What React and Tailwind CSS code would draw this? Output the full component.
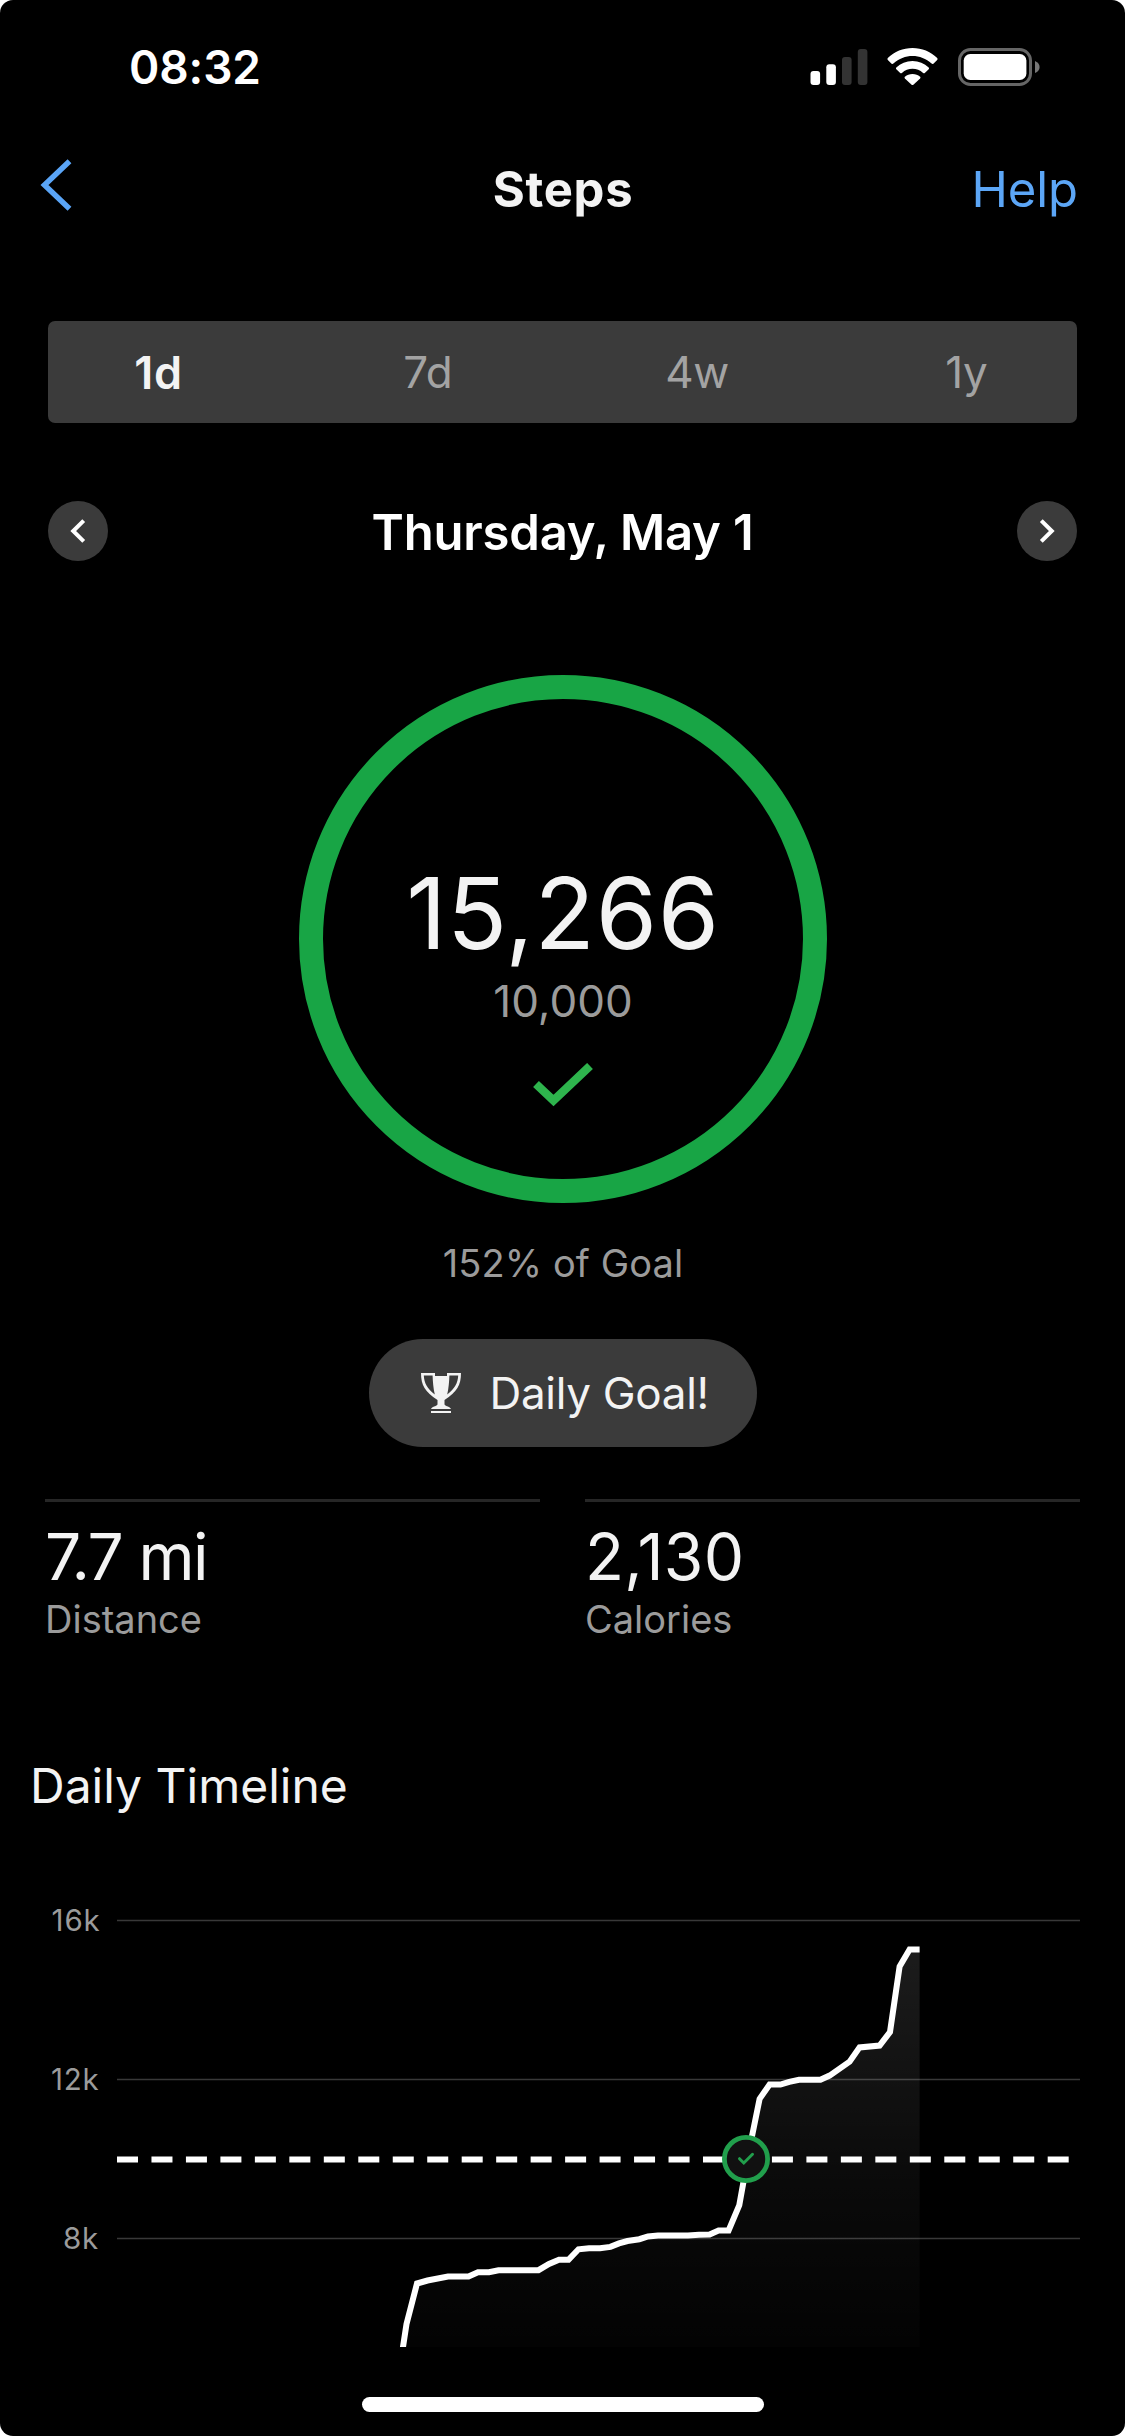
const ranges = ['1d', '7d', '4w', '1y']

const stats = [
  { value: '7.7 mi', label: 'Distance', tracking: 'tracking-[-1.6px]' },
  { value: '2,130', label: 'Calories', tracking: 'tracking-[0.3px]' }
]

const gridLines = [
  { label: '16k', y: 104.5, labelEnd: 100.5 },
  { label: '12k', y: 263.5, labelEnd: 99.5 },
  { label: '8k', y: 422.5, labelEnd: 99 }
]

// cumulative steps through the day, in chart coordinates
const points = [
  [400, 550], [403, 531], [406.5, 508], [417, 467.5], [427.5, 464.5], [448, 460.5],
  [468.5, 460.5], [478, 456.3], [489, 456.3], [498.5, 454.2], [538.5, 454.2],
  [549, 448], [559, 443.8], [568.5, 443.8], [578.5, 433.3], [589, 432.3],
  [600, 432.3], [610.4, 430.9], [619, 427.4], [627.5, 425], [639.3, 423.2],
  [648, 420.4], [658, 419.4], [688, 419.4], [699, 418.7], [709.6, 418.4],
  [718.6, 414.5], [728.6, 414.5], [739.3, 389.1], [749.4, 333], [759.6, 282.9],
  [769.6, 268.6], [780.4, 268.6], [789.3, 265.9], [799, 263.8], [820.4, 263.8],
  [829.6, 259.6], [849.6, 245.7], [859.6, 231.4], [879.6, 229.6], [890, 216],
  [899.6, 150.6], [909.6, 133.5], [919.6, 133.5]
]

const linePath = 'M' + points.map((p) => p.join(' ')).join('L')

function StatusBar() {
  return (
    <div className="flex h-[134px] items-center justify-between pr-[85px] pl-[129px]">
      <span className="text-[46px] leading-none font-[560] tracking-[-0.1px] text-white">08:32</span>

      <svg width="230" height="40" viewBox="0 0 230 40">
        {/* signal */}
        <rect x="0.5" y="24" width="9.6" height="14" rx="3" fill="#fff" />
        <rect x="16.3" y="17.3" width="9.6" height="20.7" rx="3" fill="#fff" />
        <rect x="32" y="10" width="9.6" height="28" rx="3" fill="#333" />
        <rect x="47.8" y="2" width="9.6" height="36" rx="3" fill="#333" />

        {/* wifi */}
        <g fill="#fff">
          <path d="M102.5 1C93 1 84.5 4.5 77.8 11Q77 12 77.8 13L81.6 16.7Q82.5 17.4 83.4 16.6C89 11.5 95.5 9 102.5 9C109.5 9 116 11.5 121.6 16.6Q122.5 17.4 123.4 16.7L127.2 13Q128 12 127.2 11C120.5 4.5 112 1 102.5 1Z" />
          <path d="M102.5 14C96.2 14 90.7 16.3 86.3 20.4Q85.5 21.3 86.3 22.2L90.2 26Q91 26.7 91.9 25.9C95 23.2 98.5 21.8 102.5 21.8C106.5 21.8 110 23.2 113.1 25.9Q114 26.7 114.8 26L118.7 22.2Q119.5 21.3 118.7 20.4C114.3 16.3 108.8 14 102.5 14Z" />
          <path d="M102.5 27C99.5 27 97 28 94.9 29.7Q94 30.6 94.9 31.5L101.6 37.7Q102.5 38.5 103.4 37.7L110.1 31.5Q111 30.6 110.1 29.7C108 28 105.5 27 102.5 27Z" />
        </g>

        {/* battery */}
        <rect x="149.5" y="2.5" width="71" height="35" rx="11" fill="none" stroke="#666" strokeWidth="3" />
        <rect x="153.7" y="7" width="62.7" height="26" rx="6.5" fill="#fff" />
        <path d="M225 14Q229.6 16 229.6 20T225 26Z" fill="#777" />
      </svg>
    </div>
  )
}

function NavBar() {
  return (
    <div className="grid h-[110px] grid-cols-3 items-center pr-[47px] pl-[40px]">
      <svg className="mb-2" width="32" height="52" viewBox="0 0 32 52" fill="none" stroke="#5aa5f7" strokeWidth="5.5">
        <path d="M29.5 2.2L4.5 26L29.5 49.8" />
      </svg>
      <h1 className="pl-2 text-center text-[49px] leading-none font-bold tracking-[0.7px]">Steps</h1>
      <span className="text-right text-[49px] leading-none tracking-[-0.1px] text-[#5ca6f6]">Help</span>
    </div>
  )
}

function CircleButton({ path }) {
  return (
    <button className="flex size-[60px] items-center justify-center rounded-full bg-[#3b3b3b]">
      <svg width="60" height="60" viewBox="0 0 60 60" fill="none" stroke="#fff" strokeWidth="4">
        <path d={path} />
      </svg>
    </button>
  )
}

function Trophy() {
  return (
    <svg width="40" height="40" viewBox="0 0 40 40" fill="#f3f3f3" fillRule="evenodd">
      <path d="M0 0H14V3H26V0H40C40 12 36 19 23.5 27V31.5C25 33.5 29 33.5 30 36H10C11 33.5 15 33.5 16.5 31.5V27C4 19 0 12 0 0ZM2.8 2.4C3.2 10 6 15 13.8 21.5C12.3 15 11.8 8 11.6 2.4ZM37.2 2.4C36.8 10 34 15 26.2 21.5C27.7 15 28.2 8 28.4 2.4Z" />
      <path d="M10 38H30V40H10Z" />
    </svg>
  )
}

function Timeline() {
  return (
    <svg className="block" width="1125" height="531" viewBox="0 0 1125 531">
      <defs>
        <linearGradient id="area" gradientUnits="userSpaceOnUse" x1="0" y1="133" x2="0" y2="600">
          <stop offset="0" stopColor="#fff" stopOpacity="0.11" />
          <stop offset="0.5" stopColor="#fff" stopOpacity="0.04" />
          <stop offset="1" stopColor="#fff" stopOpacity="0" />
        </linearGradient>
      </defs>

      <path d={`${linePath}V560H400Z`} fill="url(#area)" />

      {gridLines.map((line) => (
        <g key={line.label}>
          <text x={line.labelEnd} y={line.y + 10} textAnchor="end" fontSize="29.5" letterSpacing="0.8" fill="#9b9b9b">
            {line.label}
          </text>
          <path d={`M117 ${line.y}H1080`} stroke="#fff" strokeOpacity="0.22" strokeWidth="1.5" />
        </g>
      ))}

      <path d="M117 343.5H1070" stroke="#fff" strokeWidth="6" strokeDasharray="21 13.47" />
      <path d={linePath} fill="none" stroke="#fff" strokeWidth="6" />

      {/* goal reached marker */}
      <circle cx="746" cy="343" r="21.6" fill="#111" stroke="#219f4c" strokeWidth="4.8" />
      <path
        d="M739.5 342.7L743.8 347L752.5 338.3"
        fill="none"
        stroke="#219f4c"
        strokeWidth="3"
        strokeLinecap="round"
      />
    </svg>
  )
}

export default function App() {
  return (
    <div className="bg-white">
      <div className="h-[2436px] w-[1125px] overflow-hidden rounded-[13px] bg-black font-['Inter',sans-serif] text-[#f3f3f3]">
        <StatusBar />
        <NavBar />

        {/* RANGE TABS */}
        <div className="mx-12 mt-[77px] flex h-[102px] items-center gap-12 rounded-[7px] bg-[#3b3b3b]">
          {ranges.map((range, i) => (
            <button
              key={range}
              className={
                i === 0
                  ? 'flex-1 text-center text-[45px] leading-none font-semibold tracking-[0.8px]'
                  : 'flex-1 text-center text-[44px] leading-none tracking-[-0.3px] text-[#a3a3a3]'
              }
            >
              {range}
            </button>
          ))}
        </div>

        {/* DATE */}
        <div className="mx-12 mt-[78px] flex h-[60px] items-center justify-between">
          <CircleButton path="M35.7 19.6L25.2 30L35.7 40.4" />
          <h2 className="pt-0.5 text-[49px] leading-none font-[580] tracking-[-0.2px] text-white">Thursday, May 1</h2>
          <CircleButton path="M24.3 19.6L34.8 30L24.3 40.4" />
        </div>

        {/* GOAL RING */}
        <div className="mt-[114px] ml-[299px] flex size-[528px] flex-col items-center rounded-full border-24 border-[#18a545] pt-[164px]">
          <div className="text-[99px] leading-[100px] tracking-[0.7px]">15,266</div>
          <div className="mt-[13px] text-[44px] leading-[50px] text-[#9b9b9b]">10,000</div>
          <svg className="mt-[37px]" width="60" height="44" viewBox="0 0 60 44" fill="none" stroke="#2eb44d" strokeWidth="8.4">
            <path d="M3 21L20.5 37.5L57 3" />
          </svg>
        </div>

        <p className="mt-10 pl-px text-center text-[38px] leading-10 tracking-[0.1px] text-[#9b9b9b]">152% of Goal</p>

        <div className="mx-auto mt-14 flex h-[108px] w-[388px] items-center rounded-full bg-[#3b3b3b] pl-[52px]">
          <Trophy />
          <span className="ml-[29px] text-[44px] leading-none tracking-[-0.3px] whitespace-nowrap">Daily Goal!</span>
        </div>

        {/* STATS */}
        <div className="mx-[45px] mt-[52px] grid grid-cols-2 gap-[45px]">
          {stats.map((stat) => (
            <div key={stat.label} className="border-t-3 border-[#262626] pt-5">
              <div className={`text-[64px] leading-[70px] ${stat.tracking}`}>{stat.value}</div>
              <div className="mt-[7px] text-[38px] leading-10 text-[#9b9b9b]">{stat.label}</div>
            </div>
          ))}
        </div>

        {/* DAILY TIMELINE */}
        <h3 className="mt-[117px] ml-[30px] text-[48px] leading-[60px]">Daily Timeline</h3>
        <Timeline />

        <div className="mx-auto mt-[50px] h-[15px] w-[402px] rounded-full bg-white" />
      </div>
    </div>
  )
}
